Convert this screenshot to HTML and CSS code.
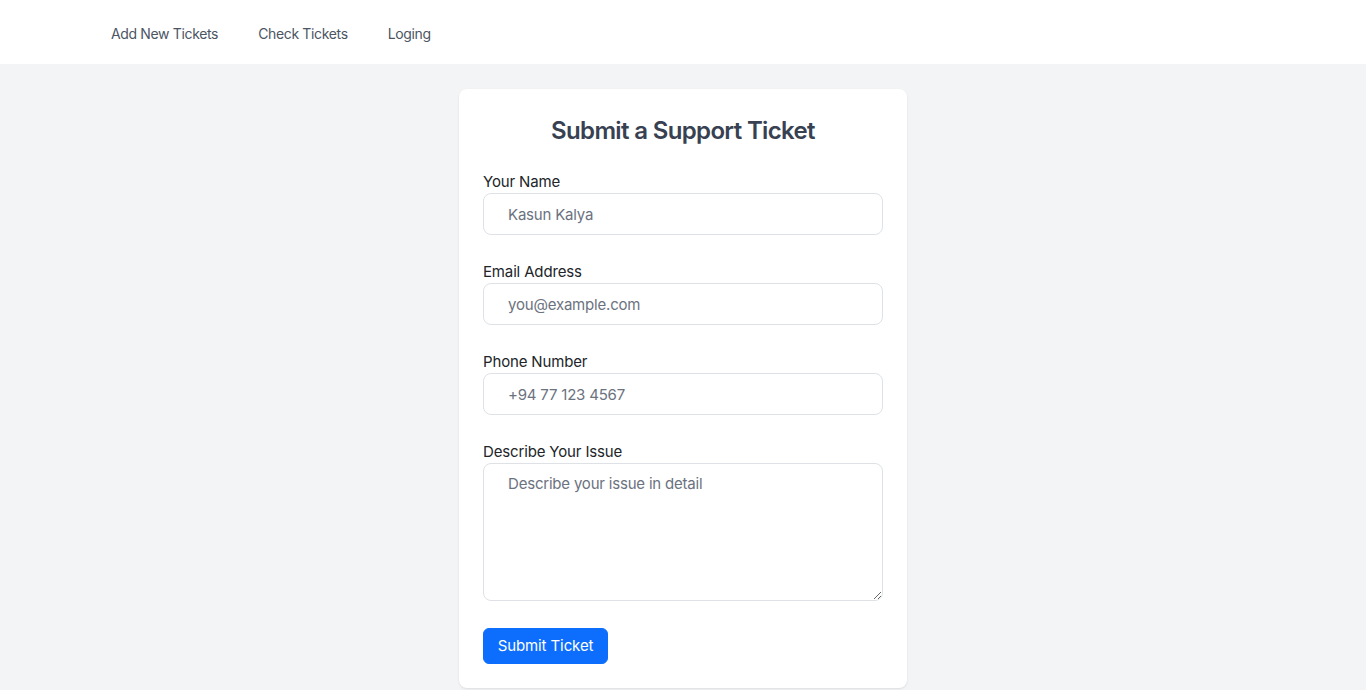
FILE: index.html
```html
<!DOCTYPE html>
<html lang="en">
<head>
<meta charset="utf-8">
<title>Submit a Support Ticket</title>
<link rel="stylesheet" href="styles.css">
</head>
<body>
<nav class="navbar">
  <a class="nav-link" href="#">Add New Tickets</a>
  <a class="nav-link" href="#">Check Tickets</a>
  <a class="nav-link" href="#">Loging</a>
</nav>
<main class="page">
  <form class="card">
    <h2 class="title">Submit a Support Ticket</h2>
    <div class="field">
      <label class="label" for="name">Your Name</label>
      <input class="input" id="name" type="text" placeholder="Kasun Kalya">
    </div>
    <div class="field">
      <label class="label" for="email">Email Address</label>
      <input class="input" id="email" type="email" placeholder="you@example.com">
    </div>
    <div class="field">
      <label class="label" for="phone">Phone Number</label>
      <input class="input" id="phone" type="tel" placeholder="+94 77 123 4567">
    </div>
    <div class="field field-last">
      <label class="label" for="issue">Describe Your Issue</label>
      <textarea class="input textarea" id="issue" rows="5" placeholder="Describe your issue in detail"></textarea>
    </div>
    <button class="btn" type="button">Submit Ticket</button>
  </form>
</main>
</body>
</html>
```
FILE: styles.css
```css
* { box-sizing: border-box; }
html, body { margin: 0; padding: 0; }
body {
  font-family: Inter, "Noto Sans", sans-serif;
  background: #f3f4f6;
  color: #212529;
  min-height: 100vh;
}
.navbar {
  height: 64px;
  background: #ffffff;
  display: flex;
  align-items: center;
  gap: 40px;
  padding-left: 111px;
  padding-top: 2px;
}
.nav-link {
  font-size: 14px;
  color: #4b5563;
  text-decoration: none;
  letter-spacing: -0.35px;
}
.page {
  display: flex;
  justify-content: center;
  padding-top: 25px;
}
.card {
  width: 448px;
  background: #ffffff;
  border-radius: 8px;
  box-shadow: 0 1px 3px rgba(0,0,0,0.06), 0 1px 2px rgba(0,0,0,0.04);
  padding: 24px;
  display: flex;
  flex-direction: column;
}
.title {
  margin: 2px 0 22px;
  font-size: 24px;
  line-height: 32px;
  font-weight: 600;
  color: #374151;
  text-align: center;
  letter-spacing: -0.65px;
}
.field {
  display: flex;
  flex-direction: column;
  margin-bottom: 24px;
}
.field-last { margin-bottom: 27px; }
.label {
  font-size: 15px;
  line-height: 24px;
  padding-top: 1px;
  margin-bottom: -1px;
  color: #212529;
  letter-spacing: -0.15px;
}
.input {
  width: 100%;
  height: 42px;
  border: 1px solid #dee2e6;
  border-radius: 8px;
  padding: 8px 24px;
  font-family: inherit;
  font-size: 15px;
  line-height: 24px;
  color: #212529;
  background: #fff;
  outline: none;
  letter-spacing: -0.2px;
}
.input::placeholder { color: #6b7280; opacity: 1; }
.textarea {
  height: 138px;
  resize: vertical;
  display: block;
}
.btn {
  align-self: flex-start;
  width: 125px;
  height: 36px;
  background: #0d6efd;
  color: #ffffff;
  border: 1px solid #0d6efd;
  border-radius: 6px;
  font-family: inherit;
  font-size: 15px;
  line-height: 22px;
  padding: 0 12px;
  letter-spacing: -0.1px;
}
```
